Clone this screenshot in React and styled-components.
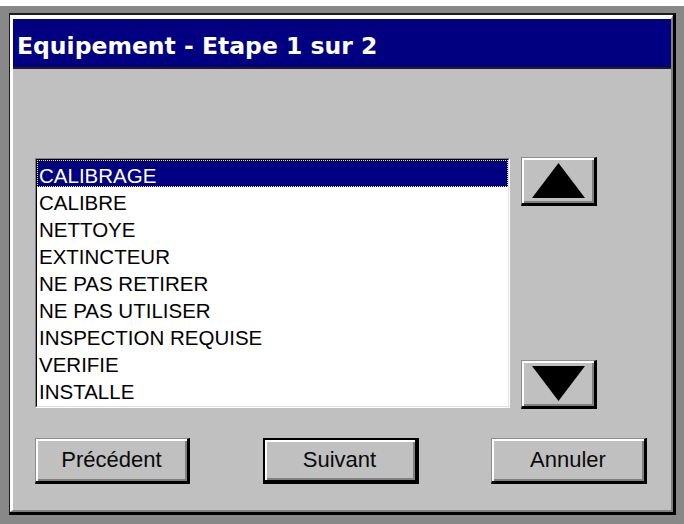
import React from "react";
import styled, { createGlobalStyle, css } from "styled-components";

const Global = createGlobalStyle`
  html, body { margin: 0; padding: 0; background: #888888; }
  * { box-sizing: border-box; }
`;

const Page = styled.div`
  width: 684px;
  height: 524px;
  border-top: 6px solid #ffffff;
  padding: 7px 8px 9px 9px;
  background: #888888;
`;

const Frame = styled.div`
  height: 502px;
  border-style: solid;
  border-width: 2px 3px 3px 1px;
  border-color: #1c1c1c #000000 #000000 #1c1c1c;
`;

const FrameInner = styled.div`
  height: 100%;
  display: flex;
  flex-direction: column;
  background: #c0c0c0;
  border-style: solid;
  border-width: 4px 2px 2px 3px;
  border-color: #ffffff #808080 #808080 #ffffff;
`;

const TitleBar = styled.div`
  height: 50px;
  flex: none;
  display: flex;
  align-items: center;
  padding: 6px 0 0 4px;
  background: #000080;
  border-bottom: 2px solid #1e1e1e;
  color: #ffffff;
  font-family: "DejaVu Sans", Verdana, sans-serif;
  font-weight: bold;
  font-size: 23.5px;
  white-space: nowrap;
`;

const Body = styled.div`
  flex: 1;
  display: flex;
  flex-direction: column;
  padding: 88px 24px 26px 22px;
`;

const ListRow = styled.div`
  display: flex;
  gap: 11px;
  height: 252px;
`;

const ListBox = styled.div`
  width: 475px;
  height: 250px;
  margin-top: 1px;
  background: #ffffff;
  border-style: solid;
  border-width: 1px;
  border-color: #808080 #ffffff #ffffff #808080;
  overflow: hidden;
`;

const ListInner = styled.div`
  height: 100%;
  border-style: solid;
  border-width: 1px;
  border-color: #000000 #dfdfdf #dfdfdf #000000;
`;

const Item = styled.div`
  height: 27px;
  padding: 4px 0 0 2px;
  line-height: 23px;
  font-family: "Liberation Sans", Arial, sans-serif;
  font-size: 20.5px;
  white-space: nowrap;
  color: ${(p) => (p.$selected ? "#ffffff" : "#000000")};
  background: ${(p) => (p.$selected ? "#000080" : "transparent")};
  outline: ${(p) => (p.$selected ? "1px dotted #f0f070" : "none")};
  outline-offset: -1px;
`;

const ArrowColumn = styled.div`
  display: flex;
  flex-direction: column;
  justify-content: space-between;
  width: 76px;
`;

const bevel = css`
  background: #c0c0c0;
  border-style: solid;
  border-width: 1px 3px 3px 1px;
  border-color: #8c8c8c #000000 #000000 #8c8c8c;
  box-shadow: inset 2px 2px 0 #ffffff, inset -2px -2px 0 #808080;
`;

const ArrowButton = styled.div`
  ${bevel}
  width: 76px;
  height: 49px;
  display: flex;
  align-items: center;
  justify-content: center;
`;

const ButtonRow = styled.div`
  display: flex;
  justify-content: space-between;
  margin-top: 29px;
`;

const Button = styled.div`
  ${bevel}
  width: ${(p) => p.$w}px;
  height: 46px;
  display: flex;
  align-items: center;
  justify-content: center;
  padding-bottom: 1px;
  font-family: "Liberation Sans", Arial, sans-serif;
  font-size: 22px;
  color: #0a0a0a;
  ${(p) =>
    p.$default &&
    css`
      border-width: 2px 4px 4px 2px;
      border-color: #000000;
    `}
`;

const items = [
  "CALIBRAGE",
  "CALIBRE",
  "NETTOYE",
  "EXTINCTEUR",
  "NE PAS RETIRER",
  "NE PAS UTILISER",
  "INSPECTION REQUISE",
  "VERIFIE",
  "INSTALLE",
];

const Triangle = ({ down }) => (
  <svg width="53" height="35" viewBox="0 0 53 35">
    {down ? (
      <polygon points="0,0 53,0 26.5,35" fill="#000" />
    ) : (
      <polygon points="26.5,0 53,35 0,35" fill="#000" />
    )}
  </svg>
);

export default function App() {
  return (
    <>
      <Global />
      <Page>
        <Frame>
          <FrameInner>
            <TitleBar>Equipement - Etape 1 sur 2</TitleBar>
            <Body>
              <ListRow>
                <ListBox>
                  <ListInner>
                    {items.map((it, i) => (
                      <Item key={it} $selected={i === 0}>
                        {it}
                      </Item>
                    ))}
                  </ListInner>
                </ListBox>
                <ArrowColumn>
                  <ArrowButton>
                    <Triangle />
                  </ArrowButton>
                  <ArrowButton>
                    <Triangle down />
                  </ArrowButton>
                </ArrowColumn>
              </ListRow>
              <ButtonRow>
                <Button $w={155}>Précédent</Button>
                <Button $w={156} $default>
                  Suivant
                </Button>
                <Button $w={156}>Annuler</Button>
              </ButtonRow>
            </Body>
          </FrameInner>
        </Frame>
      </Page>
    </>
  );
}
